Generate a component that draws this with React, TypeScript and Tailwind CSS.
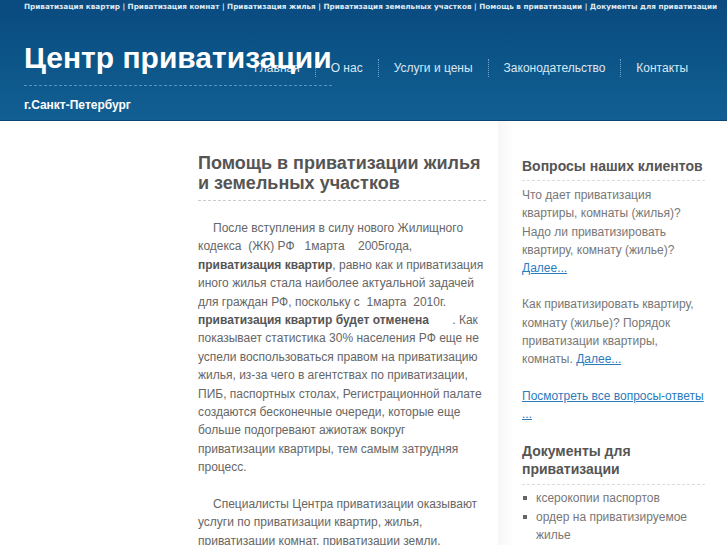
const topLinks = [
  'Приватизация квартир',
  'Приватизация комнат',
  'Приватизация жилья',
  'Приватизация земельных участков',
  'Помощь в приватизации',
  'Документы для приватизации',
];

const nav = ['Главная', 'О нас', 'Услуги и цены', 'Законодательство', 'Контакты'];

function Header() {
  return (
    <header className="relative h-[121px] bg-gradient-to-b from-[#0a4a7f] via-[#0c5588] to-[#125f93] border-b border-[#0a4470]">
      <div className="pl-[24px] pt-[1px] font-['DejaVu_Sans',sans-serif] text-[7.25px] font-bold leading-[12px] text-[#dfeaf4] whitespace-nowrap">
        {topLinks.map((t, i) => (
          <span key={t}>
            {i > 0 && ' | '}
            <a href="#">{t}</a>
          </span>
        ))}
      </div>
      <div className="pl-[24px] font-['Liberation_Sans',Arial,sans-serif]">
        <h1 className="mt-[27px] inline-block text-[30px] font-bold leading-[35px] text-white relative z-10">
          Центр приватизации
        </h1>
        <div className="mt-[10px] w-[308px] border-t border-dashed border-[#5a92bf]" />
        <div className="mt-[11px] text-[12px] font-bold leading-[16px] text-white">г.Санкт-Петербург</div>
      </div>
      <nav className="absolute left-[254px] top-[59px] flex items-center font-['Liberation_Sans',Arial,sans-serif] text-[12px] leading-[18px] text-[#dbe7f2]">
        {nav.map((n, i) => (
          <div key={n} className="flex items-center">
            {i > 0 && <span className="h-[18px] border-l border-dotted border-[#6fa3cc] mx-[15px]" />}
            <a href="#">{n}</a>
          </div>
        ))}
      </nav>
    </header>
  );
}

function Main() {
  return (
    <main className="w-[288px] shrink-0 pt-[32px] font-['Liberation_Sans',Arial,sans-serif] text-[#666]">
      <h2 className="text-[18px] font-bold leading-[20px] text-[#555]">
        Помощь в приватизации жилья и земельных участков
      </h2>
      <div className="mt-[7px] border-t border-dashed border-[#ccc]" />
      <p className="mt-[18px] indent-[15px] text-[12px] leading-[18.4px]">
        После вступления в силу нового Жилищного кодекса&nbsp; (ЖК) РФ&nbsp;&nbsp; 1марта&nbsp;&nbsp;&nbsp; 2005года,{' '}
        <b className="text-[#555]">приватизация квартир</b>, равно как и приватизация иного жилья стала наиболее
        актуальной задачей для граждан РФ, поскольку с&nbsp; 1марта&nbsp; 2010г.{' '}
        <b className="text-[#555]">приватизация квартир будет отменена</b>&nbsp;&nbsp;&nbsp;&nbsp;&nbsp;&nbsp; . Как
        показывает статистика 30% населения РФ еще не успели воспользоваться правом на приватизацию жилья, из-за чего в
        агентствах по приватизации, ПИБ, паспортных столах, Регистрационной палате создаются бесконечные очереди,
        которые еще больше подогревают ажиотаж вокруг
        <br />
        приватизации квартиры, тем самым затрудняя процесс.
      </p>
      <p className="mt-[18px] indent-[15px] text-[12px] leading-[18.4px]">
        Специалисты Центра приватизации оказывают услуги по приватизации квартир, жилья, приватизации комнат,
        приватизации земли, земельных участков.
      </p>
    </main>
  );
}

function Sidebar() {
  return (
    <aside className="relative ml-[12px] flex-1 pl-[24px] pr-[22px] pt-[36px] font-['Liberation_Sans',Arial,sans-serif] text-[12px] leading-[18.3px] text-[#777]">
      <div className="absolute left-0 top-0 h-full w-[16px] bg-gradient-to-r from-[#f6f6f6] to-white" />
      <div className="relative">
        <h3 className="text-[14px] font-bold leading-[18px] text-[#555]">Вопросы наших клиентов</h3>
        <div className="mt-[5px] border-t border-dashed border-[#ddd]" />
        <p className="mt-[5px]">
          Что дает приватизация квартиры, комнаты (жилья)? Надо ли приватизировать квартиру, комнату (жилье)?{' '}
          <a href="#" className="text-[#2b7bbd] underline">Далее...</a>
        </p>
        <p className="mt-[18px]">
          Как приватизировать квартиру, комнату (жилье)? Порядок приватизации квартиры, комнаты.{' '}
          <a href="#" className="text-[#2b7bbd] underline">Далее...</a>
        </p>
        <p className="mt-[18px]">
          <a href="#" className="text-[#2b7bbd] underline">Посмотреть все вопросы-ответы ...</a>
        </p>
        <h3 className="mt-[19px] text-[14px] font-bold leading-[18px] text-[#555]">Документы для приватизации</h3>
        <div className="mt-[6px] border-t border-dashed border-[#ddd]" />
        <ul className="mt-[4px]">
          {['ксерокопии паспортов', 'ордер на приватизируемое жилье'].map((t) => (
            <li key={t} className="flex">
              <span className="mt-[7px] mr-[9px] ml-[1px] h-[4px] w-[4px] shrink-0 bg-[#666]" />
              <span>{t}</span>
            </li>
          ))}
        </ul>
      </div>
    </aside>
  );
}

export default function App() {
  return (
    <div className="h-[545px] w-[727px] overflow-hidden bg-white">
      <Header />
      <div className="flex">
        <div className="w-[198px] shrink-0" />
        <Main />
        <Sidebar />
      </div>
    </div>
  );
}
